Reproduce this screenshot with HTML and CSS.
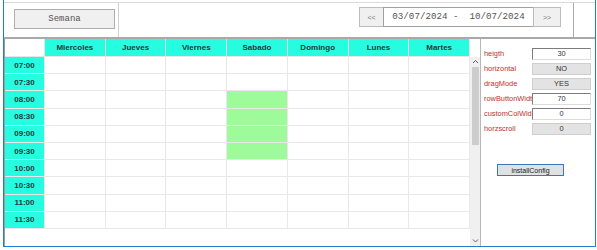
FILE: index.html
```html
<!DOCTYPE html>
<html>
<head>
    <title>Agenda semanal</title>
    <link rel="stylesheet" href="styles.css">
</head>
<body>
<div class="window">
    <div class="toolbar">
        <div class="tb-left">
            <button class="semana">Semana</button>
        </div>
        <div class="tb-mid">
            <button class="nav-btn prev">&lt;&lt;</button>
            <div class="date-range">03/07/2024 -  10/07/2024</div>
            <button class="nav-btn next">&gt;&gt;</button>
        </div>
        <div class="tb-right"></div>
    </div>

    <div class="main">
        <div class="grid-panel">
            <div class="head">
                <div class="corner"></div>
                <div class="day">Miercoles</div>
                <div class="day">Jueves</div>
                <div class="day">Viernes</div>
                <div class="day">Sabado</div>
                <div class="day">Domingo</div>
                <div class="day">Lunes</div>
                <div class="day">Martes</div>
            </div>
            <div class="scroll-area">
                <div class="rows">
                    <div class="time">07:00</div><div class="cell"></div><div class="cell"></div><div class="cell"></div><div class="cell"></div><div class="cell"></div><div class="cell"></div><div class="cell"></div>
                    <div class="time">07:30</div><div class="cell"></div><div class="cell"></div><div class="cell"></div><div class="cell"></div><div class="cell"></div><div class="cell"></div><div class="cell"></div>
                    <div class="time">08:00</div><div class="cell"></div><div class="cell"></div><div class="cell"></div><div class="cell busy"></div><div class="cell"></div><div class="cell"></div><div class="cell"></div>
                    <div class="time">08:30</div><div class="cell"></div><div class="cell"></div><div class="cell"></div><div class="cell busy"></div><div class="cell"></div><div class="cell"></div><div class="cell"></div>
                    <div class="time">09:00</div><div class="cell"></div><div class="cell"></div><div class="cell"></div><div class="cell busy"></div><div class="cell"></div><div class="cell"></div><div class="cell"></div>
                    <div class="time">09:30</div><div class="cell"></div><div class="cell"></div><div class="cell"></div><div class="cell busy"></div><div class="cell"></div><div class="cell"></div><div class="cell"></div>
                    <div class="time">10:00</div><div class="cell"></div><div class="cell"></div><div class="cell"></div><div class="cell"></div><div class="cell"></div><div class="cell"></div><div class="cell"></div>
                    <div class="time">10:30</div><div class="cell"></div><div class="cell"></div><div class="cell"></div><div class="cell"></div><div class="cell"></div><div class="cell"></div><div class="cell"></div>
                    <div class="time">11:00</div><div class="cell"></div><div class="cell"></div><div class="cell"></div><div class="cell"></div><div class="cell"></div><div class="cell"></div><div class="cell"></div>
                    <div class="time">11:30</div><div class="cell"></div><div class="cell"></div><div class="cell"></div><div class="cell"></div><div class="cell"></div><div class="cell"></div><div class="cell"></div>
                </div>
                <div class="vscroll">
                    <svg class="arrow" width="7" height="6" viewBox="0 0 7 6"><polyline points="1,4 3.5,1.5 6,4" fill="none" stroke="#606060" stroke-width="1"/></svg>
                    <div class="thumb"></div>
                    <svg class="arrow down" width="7" height="6" viewBox="0 0 7 6"><polyline points="1,1.5 3.5,4 6,1.5" fill="none" stroke="#606060" stroke-width="1"/></svg>
                </div>
            </div>
        </div>

        <div class="props">
            <div class="prop"><span class="prop-label">heigth</span><span class="prop-value edit">30</span></div>
            <div class="prop"><span class="prop-label">horizontal</span><span class="prop-value">NO</span></div>
            <div class="prop"><span class="prop-label">dragMode</span><span class="prop-value">YES</span></div>
            <div class="prop"><span class="prop-label">rowButtonWidt</span><span class="prop-value edit">70</span></div>
            <div class="prop"><span class="prop-label">customColWid</span><span class="prop-value edit">0</span></div>
            <div class="prop"><span class="prop-label">horzscroll</span><span class="prop-value">0</span></div>
            <button class="install">installConfig</button>
        </div>
    </div>
</div>
</body>
</html>
```

FILE: styles.css
```css
* {
    margin: 0;
    padding: 0;
    box-sizing: border-box;
}

body {
    width: 597px;
    height: 250px;
    overflow: hidden;
    background: #ffffff;
    font-family: 'Liberation Sans', Arial, sans-serif;
}

.window {
    margin-left: 3px;
    width: 593px;
    height: 247px;
    border: 1px solid #1c7fd6;
    border-top: none;
    display: flex;
    flex-direction: column;
}

/* top bar */
.toolbar {
    margin-top: 2px;
    height: 37px;
    border-top: 1px solid #dadada;
    border-bottom: 2px solid #a9a9a9;
    display: flex;
}

.tb-left {
    width: 115px;
    padding: 4px 0 0 10px;
    border-right: 1px solid #d0d0d0;
}

.tb-mid {
    flex: 1;
    display: flex;
    justify-content: flex-end;
    align-items: flex-start;
    padding: 4px 12px 0 0;
    border-right: 1px solid #a8a8a8;
}

.tb-right {
    width: 21px;
}

.semana {
    width: 101px;
    height: 20px;
    border: 1px solid #adadad;
    background: #f0f0f0;
    font-family: 'Liberation Mono', 'Courier New', monospace;
    font-size: 9px;
    color: #555;
}

.nav-btn {
    height: 20px;
    border: 1px solid #bdbdbd;
    background: #f0f0f0;
    font-family: 'Liberation Sans', Arial, sans-serif;
    font-size: 7px;
    color: #777;
}

.nav-btn.prev {
    width: 25px;
}

.nav-btn.next {
    width: 28px;
}

.date-range {
    width: 151px;
    height: 20px;
    margin: 0 -1px;
    border: 1px solid #a0a0a0;
    background: #fff;
    font-family: 'Liberation Mono', 'Courier New', monospace;
    font-size: 9.2px;
    line-height: 18px;
    color: #555;
    text-align: center;
    white-space: pre;
}

/* calendar grid */
.main {
    flex: 1;
    display: flex;
}

.grid-panel {
    width: 477px;
    border-left: 1px solid #9c9c9c;
    border-right: 1px solid #b8b8b8;
    display: flex;
    flex-direction: column;
}

.head,
.rows {
    display: grid;
    grid-template-columns: 39px repeat(7, 1fr);
    column-gap: 1px;
}

.head {
    width: 465px;
    height: 18px;
    padding: 0 1px 1px 0;
    background: #e6e6e6;
}

.corner {
    background: #fff;
}

.day,
.time {
    background: #26fde0;
    color: #263838;
    font-size: 8px;
    font-weight: bold;
    display: flex;
    align-items: center;
    justify-content: center;
}

.scroll-area {
    flex: 1;
    display: flex;
}

.rows {
    width: 465px;
    align-self: flex-start;
    grid-auto-rows: 16.2px;
    row-gap: 1px;
    padding: 0 1px 1px 0;
    background: #e8e8e8;
}

.cell {
    background: #fff;
}

.cell.busy {
    background: #9efb9a;
}

.vscroll {
    width: 10px;
    background: #f0f0f0;
    display: flex;
    flex-direction: column;
    align-items: center;
}

.arrow {
    margin-top: 2px;
}

.arrow.down {
    margin-top: auto;
    margin-bottom: 2px;
}

.thumb {
    margin-top: 2px;
    width: 7px;
    height: 78px;
    background: #cdcdcd;
}

/* property panel */
.props {
    flex: 1;
    padding: 9px 0 0 3px;
}

.prop {
    display: flex;
    height: 15px;
}

.prop-label {
    width: 48px;
    overflow: hidden;
    white-space: nowrap;
    font-size: 7.4px;
    line-height: 12px;
    color: #c0302c;
}

.prop-value {
    width: 59px;
    height: 12px;
    border: 1px solid #cfcfcf;
    background: #e3e3e3;
    font-size: 7.4px;
    line-height: 10px;
    color: #333;
    text-align: center;
}

.prop-value.edit {
    background: #fff;
    border-color: #7c7c7c #dcdcdc #dcdcdc #7c7c7c;
}

.install {
    display: block;
    margin: 26px 0 0 13px;
    width: 67px;
    height: 12px;
    border: 1px solid #3a78b5;
    background: #e1e1e1;
    font-family: 'Liberation Sans', Arial, sans-serif;
    font-size: 7px;
    color: #222;
}
```
